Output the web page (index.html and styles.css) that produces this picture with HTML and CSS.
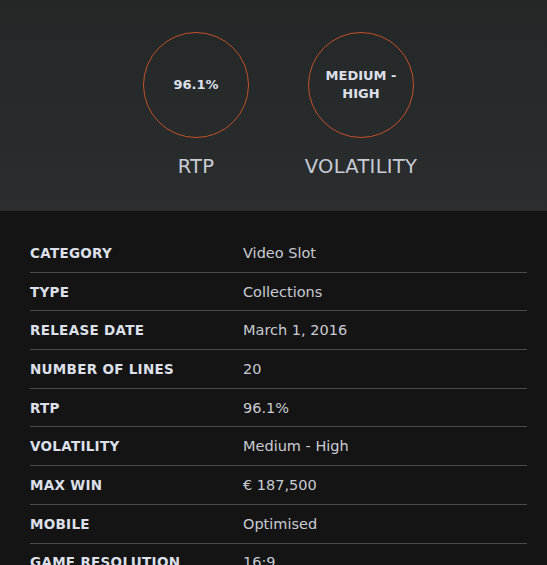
FILE: index.html
```html
<!DOCTYPE html>
<html lang="en">
<head>
    <meta charset="UTF-8">
    <meta name="viewport" content="width=device-width, initial-scale=1.0">
    <title>Game details</title>
    <link rel="stylesheet" href="styles.css">
</head>
<body>
    <div class="stats">
        <div class="stat">
            <div class="ring">96.1%</div>
            <div class="stat-label">RTP</div>
        </div>
        <div class="stat">
            <div class="ring">MEDIUM -<br>HIGH</div>
            <div class="stat-label">VOLATILITY</div>
        </div>
    </div>

    <div class="details">
        <div class="row"><span class="key">CATEGORY</span><span class="val">Video Slot</span></div>
        <div class="row"><span class="key">TYPE</span><span class="val">Collections</span></div>
        <div class="row"><span class="key">RELEASE DATE</span><span class="val">March 1, 2016</span></div>
        <div class="row"><span class="key">NUMBER OF LINES</span><span class="val">20</span></div>
        <div class="row"><span class="key">RTP</span><span class="val">96.1%</span></div>
        <div class="row"><span class="key">VOLATILITY</span><span class="val">Medium - High</span></div>
        <div class="row"><span class="key">MAX WIN</span><span class="val">€ 187,500</span></div>
        <div class="row"><span class="key">MOBILE</span><span class="val">Optimised</span></div>
        <div class="row"><span class="key">GAME RESOLUTION</span><span class="val">16:9</span></div>
    </div>
</body>
</html>
```

FILE: styles.css
```css
body {
    font-family: "DejaVu Sans", Arial, sans-serif;
    background-color: #141414;
    margin: 0;
    padding: 0;
    overflow: hidden;
}
.stats {
    height: 211px;
    box-sizing: border-box;
    padding: 32px 0 0 10px;
    background: linear-gradient(#232827, #2b2d2f);
    display: flex;
    justify-content: center;
    gap: 45px;
}
.stat {
    width: 120px;
    display: flex;
    flex-direction: column;
    align-items: center;
}
.ring {
    width: 106px;
    height: 106px;
    box-sizing: border-box;
    border: 1.5px solid #c4502a;
    border-radius: 50%;
    display: flex;
    align-items: center;
    justify-content: center;
    text-align: center;
    color: #dde0ea;
    font-size: 13px;
    font-weight: bold;
    line-height: 18px;
}
.stat-label {
    margin-top: 17px;
    color: #c8ccd6;
    font-size: 19.5px;
    letter-spacing: 0.3px;
}
.details {
    padding: 23px 20px 0 30px;
}
.row {
    display: flex;
    align-items: center;
    height: 37.7px;
    border-bottom: 1px solid #4a4b4d;
}
.key {
    width: 213px;
    color: #dde0ea;
    font-size: 13.5px;
    font-weight: bold;
    letter-spacing: 0.3px;
}
.val {
    color: #c9cbd3;
    font-size: 14.5px;
}
```
